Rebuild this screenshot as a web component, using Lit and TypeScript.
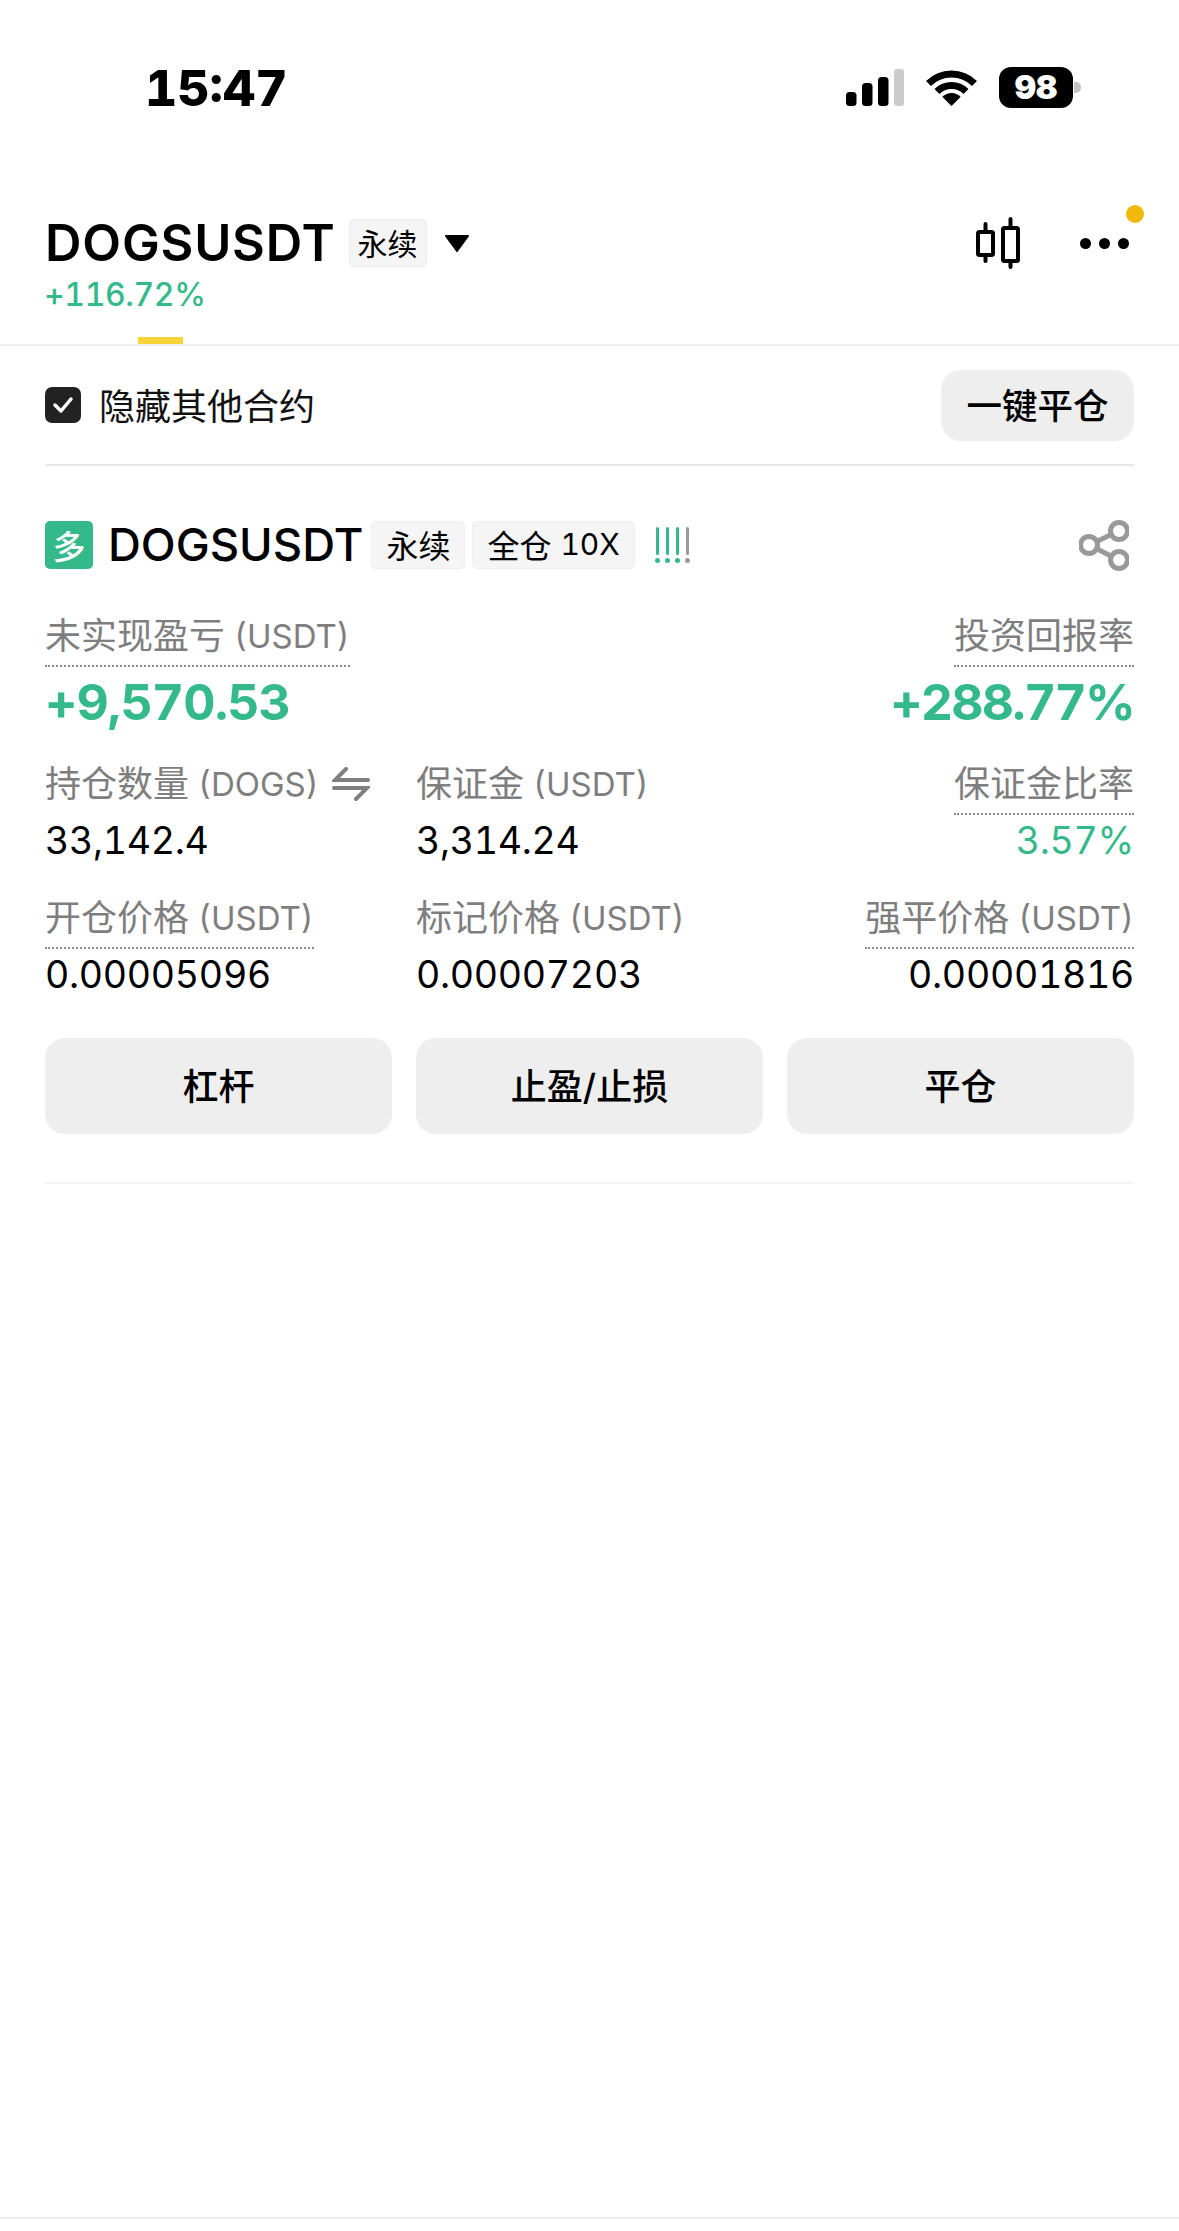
import { LitElement, html, css, svg } from "lit";
import { customElement } from "lit/decorators.js";

const metrics = [
    [
        { cn: "未实现盈亏", unit: "(USDT)", value: "+9,570.53", tone: "big", dotted: true },
        null,
        { cn: "投资回报率", unit: "", value: "+288.77%", tone: "big tight", dotted: true, right: true },
    ],
    [
        { cn: "持仓数量", unit: "(DOGS)", value: "33,142.4", swap: true },
        { cn: "保证金", unit: "(USDT)", value: "3,314.24" },
        { cn: "保证金比率", unit: "", value: "3.57%", tone: "green", dotted: true, right: true },
    ],
    [
        { cn: "开仓价格", unit: "(USDT)", value: "0.00005096", dotted: true },
        { cn: "标记价格", unit: "(USDT)", value: "0.00007203" },
        { cn: "强平价格", unit: "(USDT)", value: "0.00001816", dotted: true, right: true },
    ],
];

const signalIcon = svg`
    <rect x="0" y="23" width="10.5" height="14" rx="3.5" fill="#000"></rect>
    <rect x="16" y="14" width="10.5" height="23" rx="3.5" fill="#000"></rect>
    <rect x="32" y="8" width="10.5" height="29" rx="3.5" fill="#000"></rect>
    <rect x="48" y="0" width="10" height="37" rx="3" fill="#ccc"></rect>
`;

const wifiIcon = svg`
    <path d="M2.5 14.5A32.5 32.5 0 0 1 48.5 14.5" fill="none" stroke="#000" stroke-width="7"></path>
    <path d="M11 22.5A20.5 20.5 0 0 1 40 22.5" fill="none" stroke="#000" stroke-width="7"></path>
    <path d="M25.5 37L16.3 27.8A13 13 0 0 1 34.7 27.8Z" fill="#000"></path>
`;

const candleIcon = svg`
    <g fill="none" stroke="#000" stroke-width="4" stroke-linecap="round" stroke-linejoin="round">
        <rect x="2" y="15" width="15" height="23" rx="1.5"></rect>
        <path d="M9.5 7V15M9.5 38V44"></path>
        <rect x="27" y="11" width="15" height="33" rx="1.5"></rect>
        <path d="M34.5 2V11M34.5 44V50"></path>
    </g>
`;

const shareIcon = svg`
    <g fill="none" stroke="#999" stroke-width="5">
        <circle cx="40" cy="11" r="8.5"></circle>
        <circle cx="10" cy="25" r="8.5"></circle>
        <circle cx="40" cy="40" r="8.5"></circle>
        <path d="M17.7 21.4L32.3 14.6M17.7 28.7L32.3 36.3"></path>
    </g>
`;

@customElement("app-root")
export class AppRoot extends LitElement {
    static styles = css`
        :host {
            display: block;
            width: 1179px;
            height: 2231px;
            background: #fff;
            color: #000;
            font-family: Inter, "Noto Sans CJK SC", sans-serif;
            font-variant-numeric: tabular-nums;
            overflow: hidden;
        }
        svg {
            display: block;
            flex: none;
        }
        .status {
            height: 174px;
            box-sizing: border-box;
            padding: 67px 98px 0 145px;
            display: flex;
            justify-content: space-between;
        }
        .time {
            font-size: 50px;
            font-weight: 800;
            line-height: 42px;
        }
        .status-icons {
            display: flex;
            align-items: flex-start;
        }
        .signal {
            margin: 2px 22px 0 0;
        }
        .wifi {
            margin: 2px 22px 0 0;
        }
        .battery {
            width: 74px;
            height: 41px;
            border-radius: 12px;
            background: #000;
            color: #fff;
            font-size: 33px;
            font-weight: 900;
            line-height: 41px;
            text-align: center;
        }
        .battery-cap {
            width: 7px;
            height: 11px;
            margin: 15px 0 0 1px;
            border-radius: 0 5px 5px 0;
            background: #c4c4c4;
        }
        .head {
            height: 172px;
            box-sizing: border-box;
            padding: 45px 45px 0;
            display: flex;
            flex-direction: column;
            border-bottom: 2px solid #eee;
        }
        .title-row {
            display: flex;
            align-items: center;
            height: 48px;
        }
        .title {
            font-size: 50.5px;
            font-weight: 600;
            letter-spacing: 0.8px;
            line-height: 48px;
        }
        .tag {
            box-sizing: border-box;
            height: 48px;
            padding: 0 14px 2px;
            display: flex;
            align-items: center;
            gap: 9px;
            background: #f5f5f5;
            border: 1px solid #eee;
            border-radius: 5px;
            white-space: nowrap;
        }
        .head .tag {
            margin-left: 13px;
            padding: 0 8px 3px;
            font-size: 30px;
        }
        .caret {
            margin-left: 17px;
        }
        .tools {
            margin-left: auto;
            margin-right: 5px;
            display: flex;
            align-items: center;
        }
        .more {
            margin-left: 60px;
            position: relative;
        }
        .more .badge {
            position: absolute;
            right: -15px;
            top: -33px;
            width: 18px;
            height: 18px;
            border-radius: 50%;
            background: #f0b90b;
        }
        .change {
            margin-top: 8px;
            margin-left: -1px;
            font-size: 32px;
            font-weight: 500;
            letter-spacing: -0.4px;
            line-height: 40px;
            color: #34b98b;
        }
        .tab-mark {
            width: 45px;
            height: 7px;
            margin: 22px 0 0 93px;
            background: #f8d33a;
        }
        .filter {
            height: 118px;
            margin: 0 45px;
            display: flex;
            align-items: center;
            border-bottom: 2px solid #e6e6e6;
        }
        .check {
            width: 36px;
            height: 36px;
            border-radius: 7px;
            background: #222;
            display: flex;
            align-items: center;
            justify-content: center;
        }
        .filter-label {
            margin: 0 0 2px 18px;
            font-size: 36px;
            color: #111;
        }
        .close-all {
            margin-left: auto;
            width: 193px;
            height: 71px;
            box-sizing: border-box;
            padding-bottom: 4px;
            border-radius: 20px;
            background: #eee;
            font-size: 35.5px;
            font-weight: 500;
            display: flex;
            align-items: center;
            justify-content: center;
        }
        .card {
            margin: 0 45px;
            padding-top: 55px;
        }
        .card-head {
            display: flex;
            align-items: center;
            height: 48px;
        }
        .side {
            width: 48px;
            height: 48px;
            border-radius: 5px;
            background: #34b98b;
            color: #fff;
            font-size: 33px;
            font-weight: 500;
            display: flex;
            align-items: center;
            justify-content: center;
        }
        .symbol {
            margin-left: 15px;
            font-size: 45.5px;
            font-weight: 500;
            line-height: 48px;
        }
        .card-head .tag {
            margin-left: 8px;
            font-size: 32px;
        }
        .card-head .tag + .tag {
            margin-left: 7px;
        }
        .tag span {
            font-size: 30px;
        }
        .risk {
            margin-left: 20px;
            display: flex;
            gap: 5px;
        }
        .risk span {
            display: block;
            width: 5px;
        }
        .risk i {
            display: block;
            width: 3px;
            height: 28px;
            margin: 0 auto 3px;
            border-radius: 2px;
            background: #34b98b;
        }
        .risk b {
            display: block;
            width: 5px;
            height: 5px;
            border-radius: 50%;
            background: #34b98b;
        }
        .risk .off i,
        .risk .off b {
            background: #999;
        }
        .share {
            margin-left: auto;
            margin-right: 5px;
        }
        .metrics {
            margin-top: 45px;
            display: grid;
            grid-template-columns: repeat(3, 1fr);
            column-gap: 24px;
            row-gap: 29px;
        }
        .metric {
            display: flex;
            flex-direction: column;
            align-items: flex-start;
            min-width: 0;
        }
        .metric.right {
            align-items: flex-end;
        }
        .label {
            box-sizing: border-box;
            height: 53px;
            padding-bottom: 7px;
            display: flex;
            align-items: center;
            gap: 9px;
            color: #7e7e7e;
            font-size: 36px;
            line-height: 44px;
            border-bottom: 2px dotted transparent;
            white-space: nowrap;
        }
        .label.dotted {
            border-bottom-color: #8c8c8c;
        }
        .unit {
            font-size: 33px;
        }
        .swap {
            margin-left: 4px;
        }
        .value {
            font-size: 37.5px;
            letter-spacing: -0.3px;
            line-height: 52px;
        }
        .value.big {
            margin: 5px 0 1px;
            font-size: 50px;
            font-weight: 700;
            letter-spacing: -0.9px;
            line-height: 60px;
            color: #34b98b;
        }
        .value.big.tight {
            letter-spacing: -1.8px;
        }
        .value.green {
            color: #34b98b;
        }
        .actions {
            margin-top: 37px;
            display: grid;
            grid-template-columns: repeat(3, 1fr);
            column-gap: 24px;
        }
        .action {
            height: 96px;
            box-sizing: border-box;
            padding-bottom: 5px;
            border-radius: 20px;
            background: #eee;
            font-size: 36px;
            font-weight: 500;
            display: flex;
            align-items: center;
            justify-content: center;
        }
        .rule {
            margin: 48px 45px 0;
            height: 2px;
            background: #f3f3f3;
        }
        .bottom {
            margin-top: 1033px;
            height: 2px;
            background: #eee;
        }
    `;

    private renderMetric(m: (typeof metrics)[number][number]) {
        if (!m) return html`<div></div>`;
        const cls = m as { tone?: string; dotted?: boolean; right?: boolean; swap?: boolean };
        return html`
            <div class="metric ${cls.right ? "right" : ""}">
                <div class="label ${cls.dotted ? "dotted" : ""}">
                    <span>${m.cn}</span>
                    ${m.unit ? html`<span class="unit">${m.unit}</span>` : ""}
                    ${cls.swap
                        ? html`<svg class="swap" width="38" height="34" viewBox="0 0 38 34">
                              <path
                                  d="M36 13H3L14 2M2 21H35L24 32"
                                  fill="none"
                                  stroke="#808080"
                                  stroke-width="4"
                                  stroke-linecap="round"
                              ></path>
                          </svg>`
                        : ""}
                </div>
                <div class="value ${cls.tone || ""}">${m.value}</div>
            </div>
        `;
    }

    protected render() {
        return html`
            <div class="status">
                <div class="time">15:47</div>
                <div class="status-icons">
                    <svg class="signal" width="58" height="37" viewBox="0 0 58 37">${signalIcon}</svg>
                    <svg class="wifi" width="51" height="37" viewBox="0 0 51 37">${wifiIcon}</svg>
                    <div class="battery">98</div>
                    <div class="battery-cap"></div>
                </div>
            </div>

            <div class="head">
                <div class="title-row">
                    <div class="title">DOGSUSDT</div>
                    <div class="tag">永续</div>
                    <svg class="caret" width="26" height="17" viewBox="0 0 26 17">
                        <path d="M2 1H24L13 16Z" fill="#000" stroke="#000" stroke-width="2" stroke-linejoin="round"></path>
                    </svg>
                    <div class="tools">
                        <svg width="44" height="52" viewBox="0 0 44 52">${candleIcon}</svg>
                        <div class="more">
                            <svg width="49" height="11" viewBox="0 0 49 11">
                                <circle cx="5.5" cy="5.5" r="5.5"></circle>
                                <circle cx="24.5" cy="5.5" r="5.5"></circle>
                                <circle cx="43.5" cy="5.5" r="5.5"></circle>
                            </svg>
                            <div class="badge"></div>
                        </div>
                    </div>
                </div>
                <div class="change">+116.72%</div>
                <div class="tab-mark"></div>
            </div>

            <div class="filter">
                <div class="check">
                    <svg width="22" height="18" viewBox="0 0 22 18">
                        <path d="M3 9L9 15L19 3" fill="none" stroke="#fff" stroke-width="3.5" stroke-linecap="round" stroke-linejoin="round"></path>
                    </svg>
                </div>
                <div class="filter-label">隐藏其他合约</div>
                <div class="close-all">一键平仓</div>
            </div>

            <div class="card">
                <div class="card-head">
                    <div class="side">多</div>
                    <div class="symbol">DOGSUSDT</div>
                    <div class="tag">永续</div>
                    <div class="tag">全仓 <span>10X</span></div>
                    <div class="risk">
                        ${[0, 1, 2, 3].map(
                            (n) => html`<span class=${n === 3 ? "off" : ""}><i></i><b></b></span>`
                        )}
                    </div>
                    <svg class="share" width="50" height="51" viewBox="0 0 50 51">${shareIcon}</svg>
                </div>

                <div class="metrics">
                    ${metrics.flat().map((m) => this.renderMetric(m))}
                </div>

                <div class="actions">
                    <div class="action">杠杆</div>
                    <div class="action">止盈/止损</div>
                    <div class="action">平仓</div>
                </div>
            </div>

            <div class="rule"></div>
            <div class="bottom"></div>
        `;
    }
}
